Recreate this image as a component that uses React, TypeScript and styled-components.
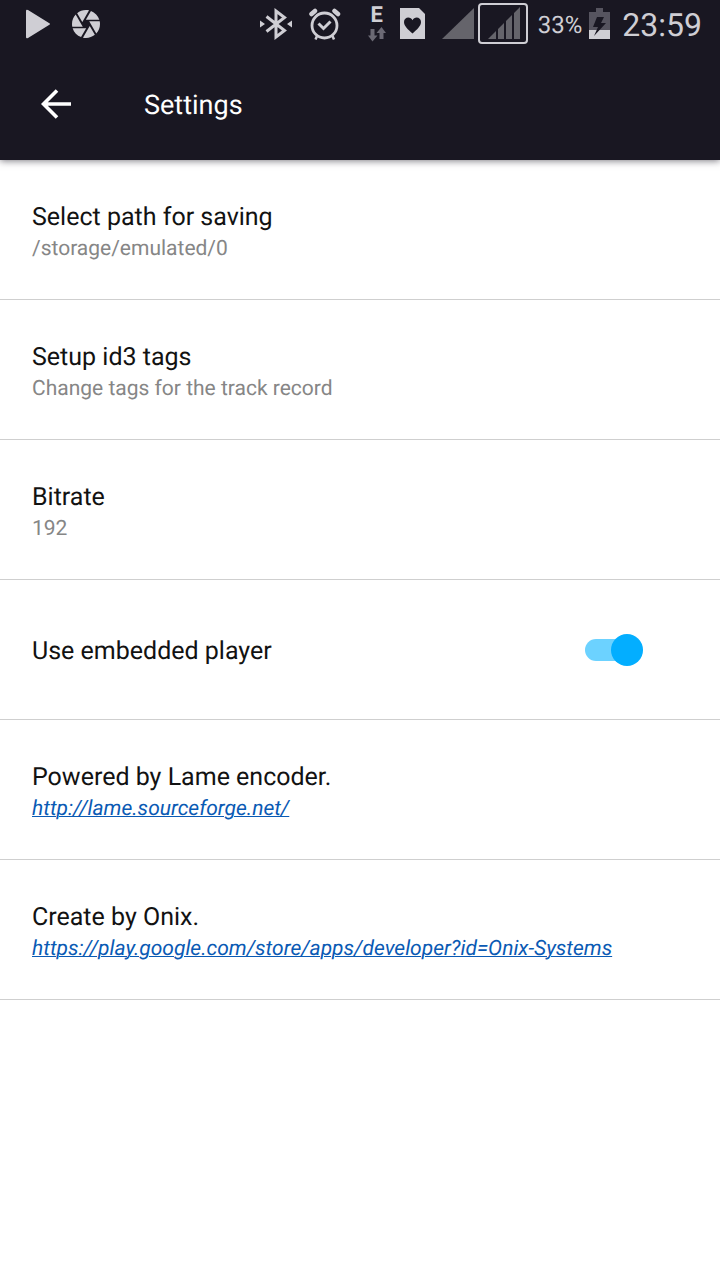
import React, { useState } from "react";
import styled, { createGlobalStyle } from "styled-components";

const GlobalStyle = createGlobalStyle`
  *, *::before { box-sizing: border-box; }
  body {
    margin: 0;
    background: #ffffff;
    color: #121212;
    font-family: Roboto, "Liberation Sans", sans-serif;
    text-rendering: geometricPrecision;
  }
`;

const Header = styled.header`
  position: relative;
  background: #191722;
  box-shadow: 0 1px 7px rgba(20, 16, 30, 0.55);
`;

const StatusBar = styled.div`
  display: flex;
  align-items: center;
  justify-content: space-between;
  height: 48px;
  padding: 0 18px 0 26px;
  color: #cfced4;
`;

const StatusGroup = styled.div<{ $gap: number }>`
  display: flex;
  align-items: center;
  gap: ${(p) => p.$gap}px;
`;

const Icon = styled.svg`
  display: block;
  flex: none;
`;

const Network = styled.div`
  display: flex;
  flex-direction: column;
  align-items: center;
  gap: 2px;
  width: 20px;
  margin: 0 6px 0 19px;
`;

const NetworkType = styled.span`
  font-size: 22px;
  line-height: 18px;
  font-weight: 700;
`;

const Signals = styled.div`
  display: flex;
  align-items: center;
  gap: 4px;
  margin: 0 3px 0 10px;
`;

const Percent = styled.span`
  font-size: 24px;
  line-height: 32px;
  margin-top: 2px;
`;

const Clock = styled.time`
  font-size: 32px;
  line-height: 40px;
  margin: 2px 0 0 5px;
`;

const Toolbar = styled.div`
  display: flex;
  align-items: center;
  gap: 64px;
  height: 112px;
  padding: 0 32px;
`;

const BackButton = styled.button`
  display: flex;
  align-items: center;
  justify-content: center;
  width: 48px;
  height: 48px;
  padding: 0;
  border: 0;
  background: none;
  color: #ffffff;
  cursor: pointer;
`;

const PageTitle = styled.h1`
  margin: 0;
  padding-top: 2px;
  color: #ffffff;
  font-size: 27px;
  line-height: 32px;
  font-weight: 400;
`;

const List = styled.ul`
  margin: 0;
  padding: 0;
  list-style: none;
`;

const Row = styled.li`
  min-height: 140px;
  padding: 42px 32px 35px;
  border-bottom: 1px solid #cfcfcf;
`;

const SwitchRow = styled.li`
  display: flex;
  align-items: center;
  justify-content: space-between;
  min-height: 140px;
  padding: 0 85px 0 32px;
  border-bottom: 1px solid #cfcfcf;
`;

const Title = styled.div`
  font-size: 25px;
  line-height: 32px;
`;

const SwitchLabel = styled.label`
  padding-top: 4px;
  font-size: 25px;
  line-height: 32px;
`;

const Detail = styled.div`
  color: #868686;
  font-size: 21px;
  line-height: 30px;
`;

const Link = styled.a`
  color: #0a5ab4;
  font-style: italic;
  text-decoration: underline;
  text-decoration-thickness: 1px;
`;

const Switch = styled.input`
  appearance: none;
  display: flex;
  align-items: center;
  justify-content: ${(p) => (p.checked ? "flex-end" : "flex-start")};
  width: 50px;
  height: 22px;
  margin: 0;
  border-radius: 11px;
  background: ${(p) => (p.checked ? "#6cd2ff" : "#bdbdbd")};
  cursor: pointer;

  &::before {
    content: "";
    flex: none;
    width: 32px;
    height: 32px;
    margin: 0 -8px;
    border-radius: 50%;
    background: ${(p) => (p.checked ? "#03aeff" : "#f1f1f1")};
  }
`;

const PlayIcon = () => (
  <Icon width="24" height="30" viewBox="0 0 24 30" fill="currentColor" aria-hidden="true">
    <path d="M0 2Q0 0 2 1L23 14Q25 15 23 16L2 29Q0 30 0 28Z" />
  </Icon>
);

const ApertureIcon = () => (
  <Icon width="28" height="28" viewBox="2 2 20 20" fill="currentColor" aria-hidden="true">
    <path d="M9.4 10.5l4.77-8.26C13.47 2.09 12.75 2 12 2c-2.4 0-4.6.85-6.32 2.25l3.66 6.35.06-.1zM21.54 9c-.92-2.92-3.15-5.26-6-6.34L11.88 9h9.66zm.26 1h-7.49l.29.5 4.76 8.25C21 16.97 22 14.61 22 12c0-.69-.07-1.35-.2-2zM8.54 12l-3.9-6.75C3.01 7.03 2 9.39 2 12c0 .69.07 1.35.2 2h7.49l-1.15-2zm-6.08 3c.92 2.92 3.15 5.26 6 6.34L12.12 15H2.46zm11.27 0l-3.9 6.76c.7.15 1.42.24 2.17.24 2.4 0 4.6-.85 6.32-2.25l-3.66-6.35-.93 1.6z" />
  </Icon>
);

const BluetoothIcon = () => (
  <Icon width="32" height="32" viewBox="0 0 32 32" aria-hidden="true">
    <path d="M6.500 8.500L24.500 22.500L16 29V3L24.500 9.500L6.500 23.500" fill="none" stroke="currentColor" strokeWidth="3" />
    <path d="M0 12.500L5 16L0 19.500ZM32 12.500L27 16L32 19.500Z" fill="currentColor" />
  </Icon>
);

const AlarmIcon = () => (
  <Icon width="32" height="32" viewBox="0 0 32 32" fill="none" stroke="currentColor" aria-hidden="true">
    <circle cx="15.500" cy="17.500" r="12.500" strokeWidth="2.800" />
    <path d="M9.500 15.500L14.500 20.500L21.500 13.500" strokeWidth="3" />
    <path d="M2.500 6L6 3M29 6L25.500 3" strokeWidth="4.500" strokeLinecap="round" />
    <path d="M8 28L6.500 31.500M23.500 28L25 31.500" strokeWidth="2.500" />
  </Icon>
);

const DataIcon = () => (
  <Icon width="18" height="15" viewBox="0 0 18 15" fill="#6b6974" aria-hidden="true">
    <path d="M2.500 2H6.500V8.500H9.500L4.500 14.500L0 8.500H2.500ZM11.500 12H15.500V6H18L13.500 0L8.500 6H11.500Z" />
  </Icon>
);

const HeartCardIcon = () => (
  <Icon width="25" height="32" viewBox="0 0 25 32" aria-hidden="true">
    <path d="M0 0H19L25 6V31H0Z" fill="currentColor" />
    <path d="M12.500 25.500C8 21.500 4 18 4 14C4 8.800 10.500 7.800 12.500 12.200C14.500 7.800 21 8.800 21 14C21 18 17 21.500 12.500 25.500Z" fill="#191722" />
  </Icon>
);

const SignalIcon = () => (
  <Icon width="32" height="32" viewBox="0 0 32 32" aria-hidden="true">
    <path d="M32 0V31H0Z" fill="#65646b" />
  </Icon>
);

const FramedSignalIcon = () => (
  <Icon width="50" height="42" viewBox="0 0 50 42" aria-hidden="true">
    <rect x="1" y="1" width="48" height="39" rx="3" fill="none" stroke="currentColor" strokeWidth="2" />
    <path d="M10 36L18 28V36ZM20 26L26 20V36H20ZM28 18L34 12V36H28ZM36 10L42 4V36H36Z" fill="#65646b" />
  </Icon>
);

const BatteryIcon = () => (
  <Icon width="21" height="32" viewBox="0 0 21 32" aria-hidden="true">
    <path d="M7 0H14V4H21V22H0V4H7Z" fill="#56545f" />
    <path d="M0 22H21V31H0Z" fill="currentColor" />
    <path d="M8 9H15L12 15H17L5 28L9 19H4Z" fill="#191722" />
  </Icon>
);

const BackIcon = () => (
  <Icon width="30" height="30" viewBox="0 0 30 30" fill="none" stroke="currentColor" strokeWidth="3.600" aria-hidden="true">
    <path d="M16 1.500L2.500 15L16 28.500M2 15H30" />
  </Icon>
);

const settings = [
  { title: "Select path for saving", detail: "/storage/emulated/0" },
  { title: "Setup id3 tags", detail: "Change tags for the track record" },
  { title: "Bitrate", detail: "192" },
];

const credits = [
  { title: "Powered by Lame encoder.", url: "http://lame.sourceforge.net/" },
  { title: "Create by Onix.", url: "https://play.google.com/store/apps/developer?id=Onix-Systems" },
];

export default function App() {
  const [embedded, setEmbedded] = useState(true);

  return (
    <>
      <GlobalStyle />
      <Header>
        <StatusBar>
          <StatusGroup $gap={22}>
            <PlayIcon />
            <ApertureIcon />
          </StatusGroup>
          <StatusGroup $gap={7}>
            <StatusGroup $gap={17}>
              <BluetoothIcon />
              <AlarmIcon />
            </StatusGroup>
            <Network>
              <NetworkType>E</NetworkType>
              <DataIcon />
            </Network>
            <HeartCardIcon />
            <Signals>
              <SignalIcon />
              <FramedSignalIcon />
            </Signals>
            <Percent>33%</Percent>
            <BatteryIcon />
            <Clock>23:59</Clock>
          </StatusGroup>
        </StatusBar>
        <Toolbar>
          <BackButton type="button" aria-label="Back">
            <BackIcon />
          </BackButton>
          <PageTitle>Settings</PageTitle>
        </Toolbar>
      </Header>
      <main>
        <List>
          {settings.map((item) => (
            <Row key={item.title}>
              <Title>{item.title}</Title>
              <Detail>{item.detail}</Detail>
            </Row>
          ))}
          <SwitchRow>
            <SwitchLabel htmlFor="embedded-player">Use embedded player</SwitchLabel>
            <Switch
              id="embedded-player"
              type="checkbox"
              role="switch"
              checked={embedded}
              onChange={(event) => setEmbedded(event.target.checked)}
            />
          </SwitchRow>
          {credits.map((item) => (
            <Row key={item.title}>
              <Title>{item.title}</Title>
              <Detail>
                <Link href={item.url}>{item.url}</Link>
              </Detail>
            </Row>
          ))}
        </List>
      </main>
    </>
  );
}
